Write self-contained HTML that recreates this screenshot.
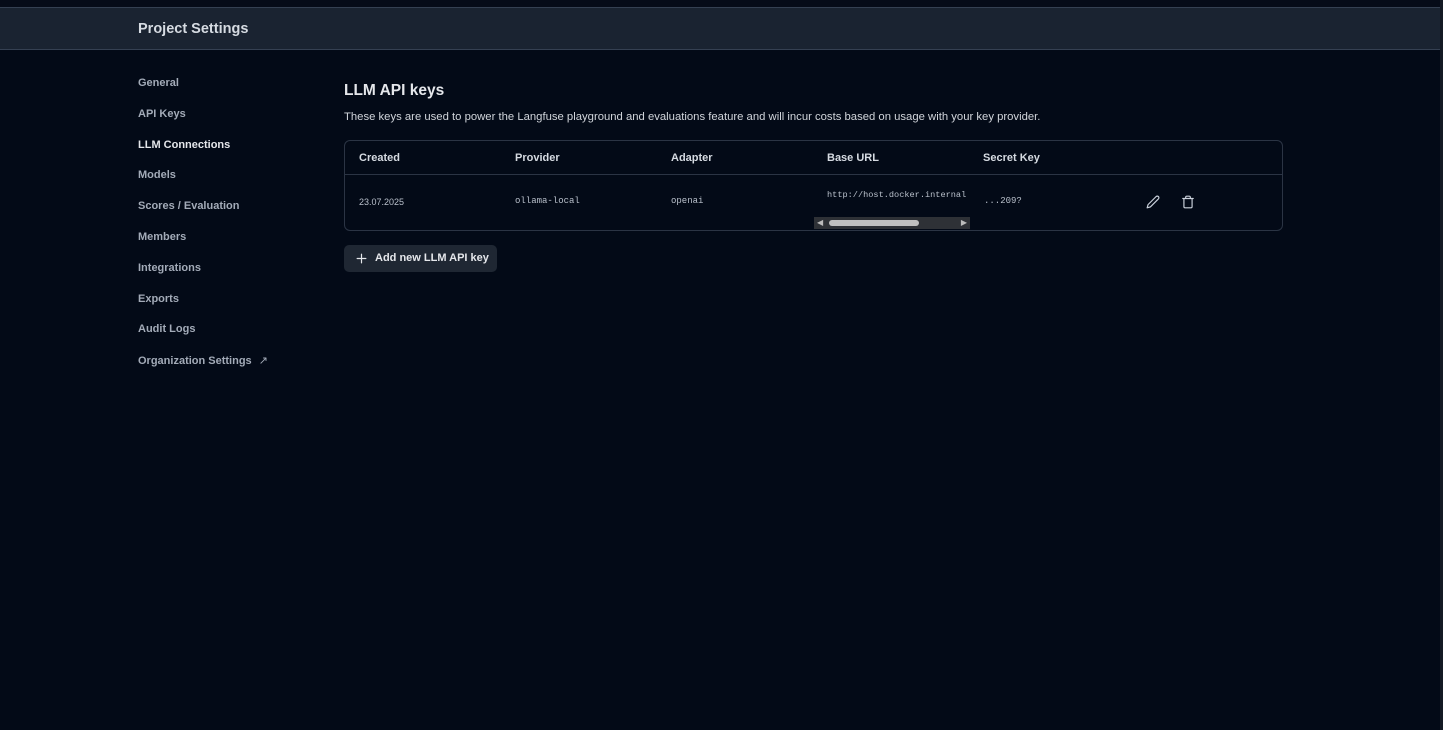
<!DOCTYPE html>
<html><head><meta charset="utf-8"><style>
*{margin:0;padding:0;box-sizing:border-box}
body{width:1443px;height:730px;background:#030a17;font-family:"Liberation Sans",sans-serif;overflow:hidden;position:relative;color:#e5e7eb}
.top{position:absolute;left:0;top:0;width:1443px;height:7px;background:#060b18}
.hdr{position:absolute;left:0;top:7px;width:1440px;height:43px;background:#1a2331;border-top:1px solid #354052;border-bottom:1px solid #354052}
.hdr span{position:absolute;left:138px;top:13px;font-size:14.5px;font-weight:bold;color:#d6dbe2}
.rb{position:absolute;right:0;top:0;width:3px;height:730px;background:#141a24}
.nav a{position:absolute;left:138px;font-size:11px;font-weight:bold;color:#a3abb8;text-decoration:none}
.nav a.act{color:#e5e7eb}
h1{position:absolute;left:344px;top:82px;font-size:15.5px;color:#e5e7eb}
.desc{position:absolute;left:344px;top:111px;font-size:11.3px;color:#d1d5db}
.tbl{position:absolute;left:344px;top:140px;width:939px;height:91px;border:1px solid #2b3444;border-radius:6px}
.hline{position:absolute;left:0;top:33px;width:100%;height:1px;background:#2b3444}
.th{position:absolute;top:11px;font-size:11px;font-weight:bold;color:#d6dbe2}
.td{position:absolute;font-size:9px;color:#b9c0cb}
.mono{font-family:"Liberation Mono",monospace}
.sb{position:absolute;left:469px;top:76px;width:156px;height:12px;background:#2e3136}
.thumb{position:absolute;left:15px;top:3px;width:90px;height:6px;border-radius:3px;background:#c0c0c0}
.btn{position:absolute;left:344px;top:245px;width:153px;height:27px;background:#1f2733;border-radius:5px;font-size:11px;font-weight:bold;color:#e5e7eb}
</style></head><body>
<div class="top"></div>
<div class="hdr"><span>Project Settings</span></div>
<div class="rb"></div>
<div class="nav">
<a style="top:77px">General</a>
<a style="top:108px">API Keys</a>
<a class="act" style="top:139px">LLM Connections</a>
<a style="top:169px">Models</a>
<a style="top:200px">Scores / Evaluation</a>
<a style="top:231px">Members</a>
<a style="top:262px">Integrations</a>
<a style="top:293px">Exports</a>
<a style="top:323px">Audit Logs</a>
<a style="top:354px">Organization Settings <span style="margin-left:4px;font-weight:normal">↗</span></a>
</div>
<h1>LLM API keys</h1>
<div class="desc">These keys are used to power the Langfuse playground and evaluations feature and will incur costs based on usage with your key provider.</div>
<div class="tbl">
<div class="hline"></div>
<div class="th" style="left:14px">Created</div>
<div class="th" style="left:170px">Provider</div>
<div class="th" style="left:326px">Adapter</div>
<div class="th" style="left:482px">Base URL</div>
<div class="th" style="left:638px">Secret Key</div>
<div class="td" style="left:14px;top:56px">23.07.2025</div>
<div class="td mono" style="left:170px;top:55px">ollama-local</div>
<div class="td mono" style="left:326px;top:55px">openai</div>
<div class="td mono" style="left:482px;top:49px;width:144px;overflow:hidden;white-space:nowrap;font-size:8.6px">http://host.docker.internal</div>
<div class="td mono" style="left:639px;top:55px">...209?</div>
<div class="sb"><span style="position:absolute;left:3px;top:1px;font-size:8px;color:#bbb">◀</span><div class="thumb"></div><span style="position:absolute;right:3px;top:1px;font-size:8px;color:#bbb">▶</span></div>
<svg style="position:absolute;left:801px;top:54px" width="14" height="14" viewBox="0 0 24 24" fill="none" stroke="#cbd2dc" stroke-width="2" stroke-linecap="round" stroke-linejoin="round"><path d="M17 3a2.85 2.85 0 1 1 4 4L7.5 20.5 2 22l1.5-5.5Z"/></svg>
<svg style="position:absolute;left:836px;top:54px" width="14" height="14" viewBox="0 0 24 24" fill="none" stroke="#cbd2dc" stroke-width="2" stroke-linecap="round" stroke-linejoin="round"><path d="M3 6h18M19 6v14a2 2 0 0 1-2 2H7a2 2 0 0 1-2-2V6M8 6V4a2 2 0 0 1 2-2h4a2 2 0 0 1 2 2v2"/></svg>
</div>
<div class="btn"><svg style="position:absolute;left:11px;top:7px" width="13" height="13" viewBox="0 0 24 24" stroke="#e5e7eb" stroke-width="2.2" stroke-linecap="round"><path d="M12 4v16M4 12h16"/></svg><span style="position:absolute;left:31px;top:7px">Add new LLM API key</span></div>
</body></html>
